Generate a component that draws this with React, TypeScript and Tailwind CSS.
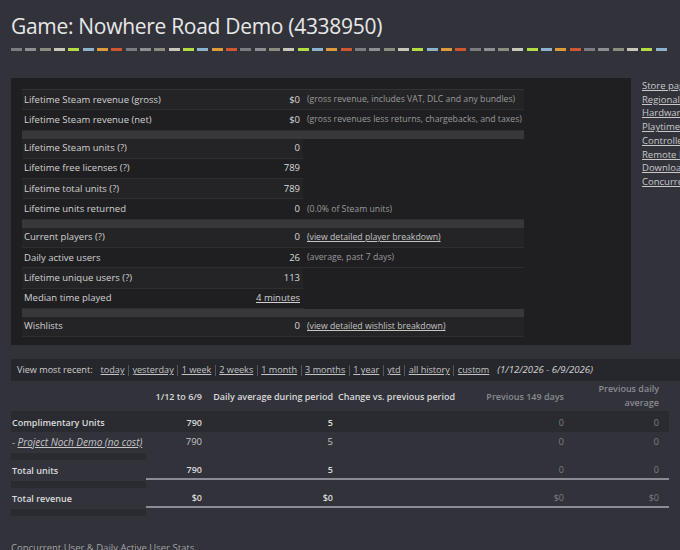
import React from 'react';

const dashColors = [
  'bg-[#7b7c82]',
  'bg-[#8e8f93]',
  'bg-[#8b8e7c]',
  'bg-[#c7c8b8]',
  'bg-[#b3dd45]',
  'bg-[#8db2cb]',
  'bg-[#dd9b3c]',
  'bg-[#cf5631]',
];

type Stat =
  | { sep: true }
  | { sep?: false; label: string; value: string; valueLink?: boolean; note?: string; noteLink?: boolean };

const stats: Stat[] = [
  { label: 'Lifetime Steam revenue (gross)', value: '$0', note: '(gross revenue, includes VAT, DLC and any bundles)' },
  { label: 'Lifetime Steam revenue (net)', value: '$0', note: '(gross revenues less returns, chargebacks, and taxes)' },
  { sep: true },
  { label: 'Lifetime Steam units (?)', value: '0' },
  { label: 'Lifetime free licenses (?)', value: '789' },
  { label: 'Lifetime total units (?)', value: '789' },
  { label: 'Lifetime units returned', value: '0', note: '(0.0% of Steam units)' },
  { sep: true },
  { label: 'Current players (?)', value: '0', note: '(view detailed player breakdown)', noteLink: true },
  { label: 'Daily active users', value: '26', note: '(average, past 7 days)' },
  { label: 'Lifetime unique users (?)', value: '113' },
  { label: 'Median time played', value: '4 minutes', valueLink: true },
  { sep: true },
  { label: 'Wishlists', value: '0', note: '(view detailed wishlist breakdown)', noteLink: true },
];

const sideLinks = [
  'Store page',
  'Regional sales report',
  'Hardware survey',
  'Playtime',
  'Controller usage',
  'Remote Play',
  'Downloads by region',
  'Concurrent users',
];

const ranges = ['today', 'yesterday', '1 week', '2 weeks', '1 month', '3 months', '1 year', 'ytd', 'all history', 'custom'];

function DashRule() {
  return (
    <div className="flex gap-[3.33px] overflow-hidden">
      {Array.from({ length: 50 }, (_, i) => (
        <span key={i} className={`h-[3px] w-[11px] shrink-0 ${dashColors[i % 8]}`} />
      ))}
    </div>
  );
}

function StatsPanel() {
  let n = 0;
  return (
    <div className="w-[620px] shrink-0 bg-[#1f1f21] pt-[11px] pb-[8px] pl-[11px]">
      <div className="w-[502px] border-t border-[#333336]">
        {stats.map((s, i) => {
          if (s.sep) {
            n = 0;
            return <div key={i} className="h-[8px] bg-[#38383b]" />;
          }
          const bg = n++ % 2 === 0 ? 'bg-[#242426]' : 'bg-[#1f1f21]';
          return (
            <div key={i} className="flex h-[20.3px] whitespace-nowrap">
              <div className={`flex w-[281px] items-center justify-between border-b border-[#2e2e31] pl-[2px] pr-[3px] ${bg}`}>
                <span className="text-[#d2d2d2]">{s.label}</span>
                <span className={s.valueLink ? 'text-[#cfcfcf] underline' : 'text-[#dadada]'}>{s.value}</span>
              </div>
              {s.note && (
                <div className={`flex flex-1 items-center border-b border-[#2e2e31] pl-[4px] text-[8.7px] ${bg}`}>
                  <span className={s.noteLink ? 'text-[#c4c4c4] underline' : 'text-[#9a9a9a]'}>{s.note}</span>
                </div>
              )}
            </div>
          );
        })}
      </div>
    </div>
  );
}

function RangeBar() {
  return (
    <div className="mt-[14px] ml-[11px] flex h-[22px] items-center whitespace-nowrap bg-[#26272c] pl-[6px] text-[9.1px]">
      <span className="mr-[8px] text-[#d0d0d0]">View most recent:</span>
      {ranges.map((r, i) => (
        <React.Fragment key={r}>
          {i > 0 && <span className="mx-[3.5px] h-[11px] border-l border-[#55565c]" />}
          <a className="text-[#c4c4c4] underline">{r}</a>
        </React.Fragment>
      ))}
      <span className="ml-[8px] text-[9.6px] italic text-[#d2d2d2]">(1/12/2026 - 6/9/2026)</span>
    </div>
  );
}

type Cell = { text: string; dim?: boolean };

function UnitsTable() {
  const valueCls = ['w-[60px] pr-[4px]', 'w-[130px] pr-[3px]', 'w-[126px]', 'w-[106px] pr-[4px]', 'w-[101px] pr-[10px]'];
  const row = (label: React.ReactNode, cells: Cell[], opts: { bold?: boolean; bg?: string; total?: boolean }) => (
    <div className={`flex h-[20px] whitespace-nowrap ${opts.bg ?? ''} ${opts.bold ? 'text-[9px] font-semibold' : ''}`}>
      <div className="flex w-[135px] items-center pl-[1px] text-[#dcdcdc]">{label}</div>
      {cells.map((c, i) => (
        <div
          key={i}
          className={`flex items-center justify-end ${valueCls[i]} ${opts.total ? 'border-b-2 border-[#8b8c93]' : ''} ${
            c.dim ? 'font-normal text-[#7e7f85]' : opts.bold ? 'text-[#dcdcdc]' : 'text-[#c6c6c6]'
          }`}
        >
          {c.text}
        </div>
      ))}
    </div>
  );
  const spacer = (
    <div className="flex h-[8px]">
      <div className="w-[135px] border-t border-[#34353c] bg-[#2a2b31]" />
    </div>
  );

  return (
    <div className="ml-[11px] w-[658px]">
      <div className="flex h-[31px] whitespace-nowrap border-b border-[#2a2b31] text-[9px] font-semibold">
        <div className="w-[135px]" />
        <div className="flex w-[60px] items-center justify-end pr-[4px] text-[#d9d9d9]">1/12 to 6/9</div>
        <div className="flex w-[130px] items-center justify-end pr-[3px] text-[#d9d9d9]">Daily average during period</div>
        <div className="flex w-[126px] items-center pl-[2px] text-[#d9d9d9]">Change vs. previous period</div>
        <div className="flex w-[106px] items-center justify-end pr-[4px] text-[#8a8b90]">Previous 149 days</div>
        <div className="flex w-[101px] items-center justify-end pr-[10px] text-right leading-[14px] text-[#8a8b90]">
          Previous daily
          <br />
          average
        </div>
      </div>
      {row('Complimentary Units', [{ text: '790' }, { text: '5' }, { text: '' }, { text: '0', dim: true }, { text: '0', dim: true }], {
        bold: true,
        bg: 'bg-[#2a2b31]',
      })}
      {row(
        <span className="text-[#c6c6c6]">
          - <a className="text-[10px] italic underline">Project Noch Demo (no cost)</a>
        </span>,
        [{ text: '790' }, { text: '5' }, { text: '' }, { text: '0', dim: true }, { text: '0', dim: true }],
        {}
      )}
      {spacer}
      {row('Total units', [{ text: '790' }, { text: '5' }, { text: '' }, { text: '0', dim: true }, { text: '0', dim: true }], {
        bold: true,
        total: true,
      })}
      {spacer}
      {row('Total revenue', [{ text: '$0' }, { text: '$0' }, { text: '' }, { text: '$0', dim: true }, { text: '$0', dim: true }], {
        bold: true,
        total: true,
      })}
      {spacer}
    </div>
  );
}

export default function App() {
  return (
    <div className="h-[550px] w-[680px] overflow-hidden bg-[#31323a] font-['Open_Sans','Noto_Sans',sans-serif] text-[9.5px] text-[#d2d2d2]">
      <div className="px-[11px] pt-[15px]">
        <h1 className="whitespace-nowrap text-[21px] leading-[22px] tracking-[-0.3px] text-[#e8e8e8]">
          Game: Nowhere Road Demo (4338950)
        </h1>
        <div className="mt-[11px]">
          <DashRule />
        </div>
      </div>

      <div className="mt-[27px] flex gap-[11px] pl-[11px]">
        <StatsPanel />
        <div className="flex flex-col whitespace-nowrap pt-[1px] leading-[13.7px]">
          {sideLinks.map((l) => (
            <a key={l} className="text-[#c9c9c9] underline">
              {l}
            </a>
          ))}
        </div>
      </div>

      <RangeBar />
      <UnitsTable />

      <div className="mt-[25px] ml-[11px] text-[#a3a3a3]">Concurrent User &amp; Daily Active User Stats</div>
    </div>
  );
}
